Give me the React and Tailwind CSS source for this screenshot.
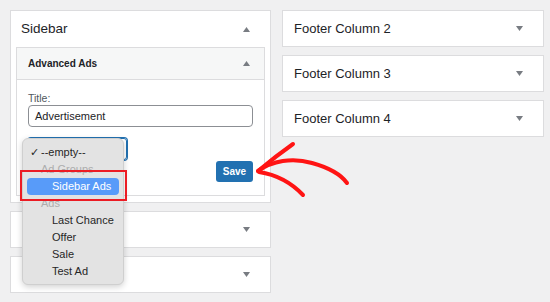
import React from 'react'

const Caret = ({ up }) => (
  <svg width="7" height="5" viewBox="0 0 7 5" className="shrink-0">
    {up ? <polygon points="3.5,0 7,5 0,5" fill="#787c82" /> : <polygon points="0,0 7,0 3.5,5" fill="#787c82" />}
  </svg>
)

function Collapsed({ title }) {
  return (
    <div className="h-[37px] bg-white border border-[#dcdcde] flex items-center justify-between pl-[11px] pr-[20px]">
      <span className="text-[13px] text-[#1d2327]">{title}</span>
      <Caret />
    </div>
  )
}

const ITEMS = [
  { label: '--empty--', checked: true },
  { label: 'Ad Groups', group: true },
  { label: 'Sidebar Ads', active: true },
  { label: 'Ads', group: true },
  { label: 'Last Chance' },
  { label: 'Offer' },
  { label: 'Sale' },
  { label: 'Test Ad' },
]

export default function App() {
  return (
    <div
      className="relative w-[550px] h-[302px] overflow-hidden bg-[#f0f0f1] flex gap-[11px] pl-[10px] pt-[10px]"
      style={{ fontFamily: '"Liberation Sans", Arial, sans-serif' }}
    >
      {/* Left column */}
      <div className="w-[261px] flex flex-col gap-[8px]">
        <div className="bg-white border border-[#dcdcde] pb-[6px]">
          <div className="h-[36px] flex items-center justify-between pl-[10px] pr-[20px]">
            <span className="text-[13.5px] text-[#1d2327]">Sidebar</span>
            <Caret up />
          </div>
          <div className="mx-[5px] border border-[#dcdcde]">
            <div className="h-[32px] bg-[#f6f7f7] border-b border-[#dcdcde] flex items-center justify-between pl-[11px] pr-[14px]">
              <span className="text-[10px] font-bold text-[#1d2327]">Advanced Ads</span>
              <Caret up />
            </div>
            <div className="px-[11px] pt-[12px] pb-[13px]">
              <div className="text-[10.5px] leading-[13px] text-[#50575e]">Title:</div>
              <div className="h-[22px] border border-[#8c8f94] rounded-[4px] flex items-center px-[6px] text-[11px] text-[#1d2327]">
                Advertisement
              </div>
              <div className="mt-[11px] h-[22px] w-[99px] border border-[#2271b1] rounded-[3px] shadow-[0_0_0_1px_#2271b1]" />
              <div className="mt-[1px] flex justify-end">
                <div className="h-[21px] w-[37px] rounded-[3px] bg-[#2271b1] flex items-center justify-center text-[10px] font-bold text-white">
                  Save
                </div>
              </div>
            </div>
          </div>
        </div>
        <Collapsed title="" />
        <Collapsed title="" />
      </div>

      {/* Right column */}
      <div className="w-[262px] flex flex-col gap-[8px]">
        <Collapsed title="Footer Column 2" />
        <Collapsed title="Footer Column 3" />
        <Collapsed title="Footer Column 4" />
      </div>

      {/* Native select popup */}
      <div className="absolute left-[22px] top-[138px] w-[102px] h-[147px] bg-[#e3e3e3] rounded-[6px] border border-[#cfcfcf] shadow-[0_2px_6px_rgba(0,0,0,0.18)] py-[5px]">
        {ITEMS.map(it => (
          <div
            key={it.label}
            className={`relative h-[17px] mx-[4px] rounded-[4px] flex items-center text-[11px] ${
              it.active ? 'bg-[#589bf9] text-white pl-[25px]' : it.group ? 'text-[#adadad] pl-[14px]' : 'text-[#262626] pl-[25px]'
            }`}
          >
            {it.checked && <span className="absolute left-[3px] text-[11px]">✓</span>}
            {it.checked ? <span className="-ml-[11px]">{it.label}</span> : it.label}
          </div>
        ))}
      </div>

      {/* Red highlight box */}
      <div className="absolute left-[20px] top-[170px] w-[107px] h-[31px] border-2 border-[#ec1c24]" />

      {/* Arrow */}
      <svg className="absolute inset-0 pointer-events-none" width="550" height="302" viewBox="0 0 550 302">
        <g fill="none" stroke="#ff1414" strokeWidth="4" strokeLinecap="round" strokeLinejoin="round">
          <path d="M258 171 C 272 161, 292 157, 312 163 C 330 168, 342 176, 347 183" />
          <path d="M258 171 Q 276 156, 293 144" />
          <path d="M259 172 Q 285 176, 303 195" />
        </g>
      </svg>
    </div>
  )
}
